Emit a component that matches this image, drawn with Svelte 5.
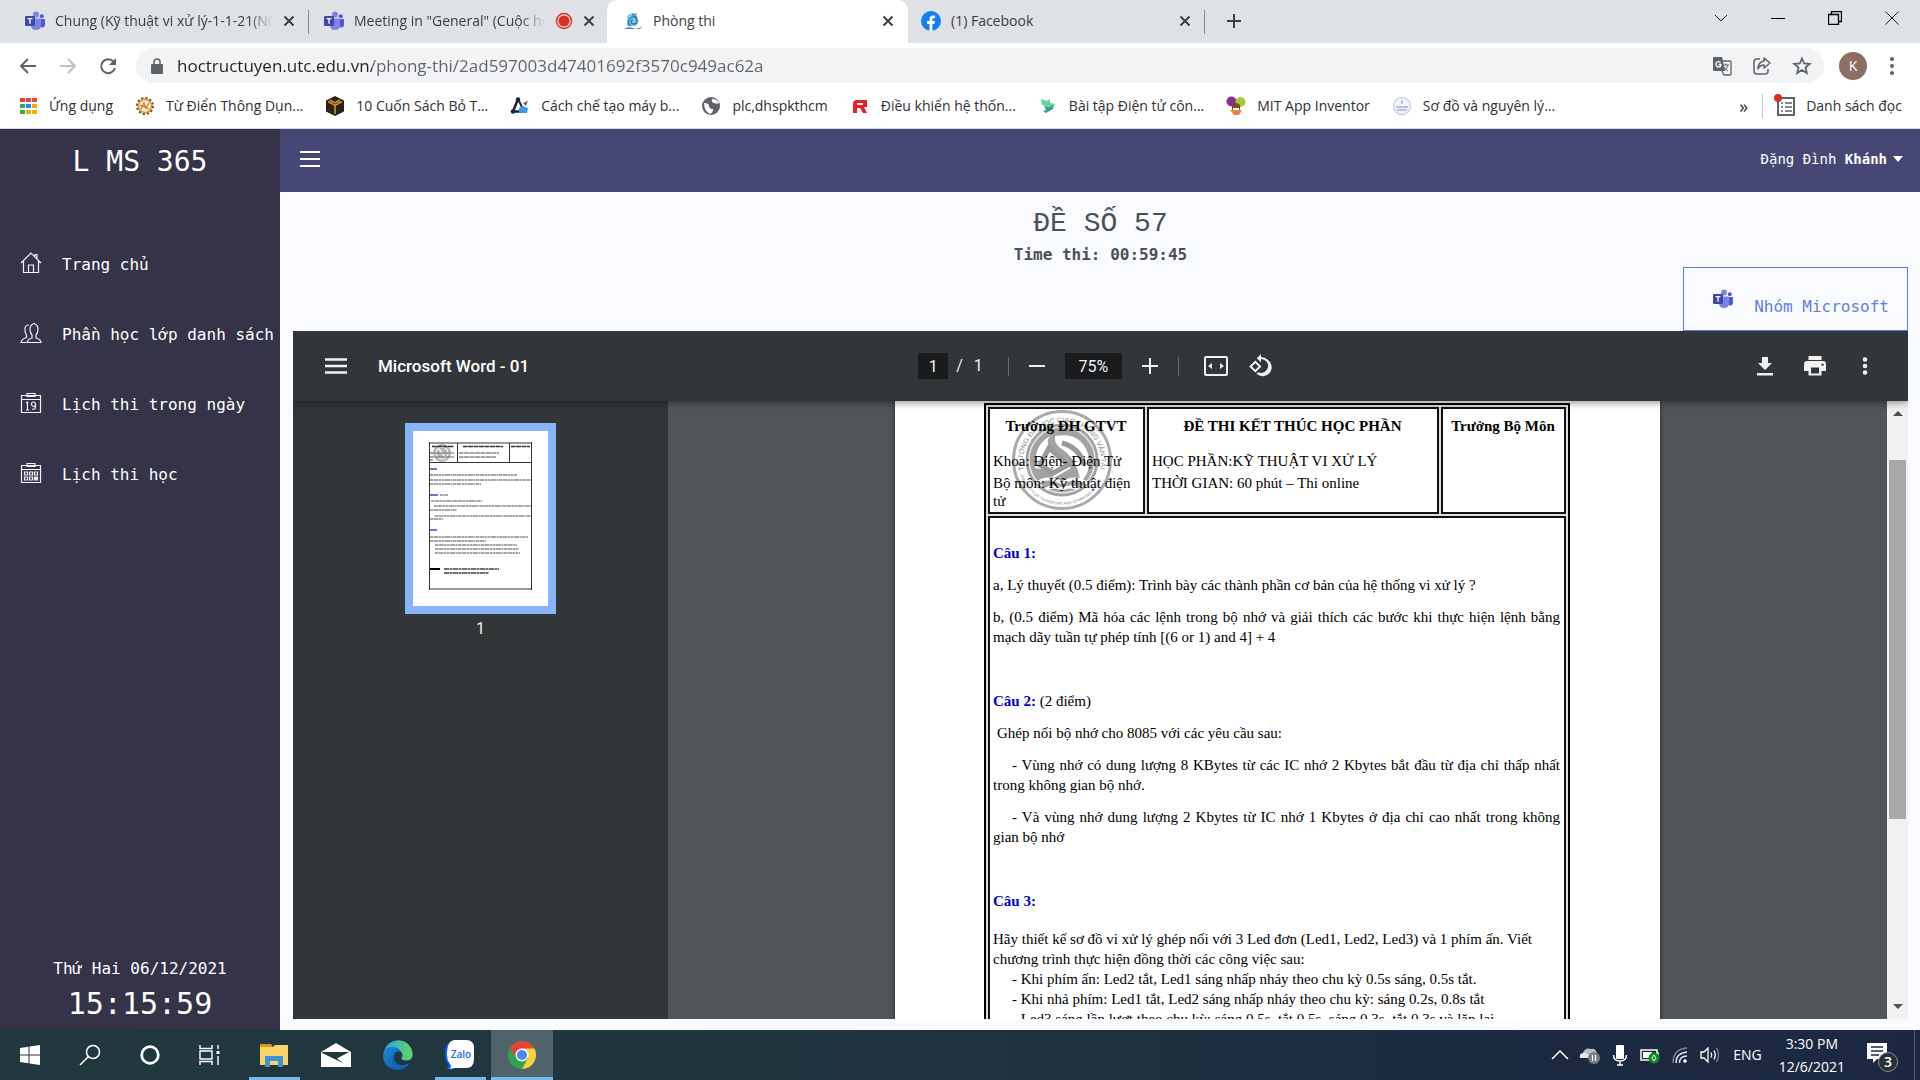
<script>
  const tabs = [
    { title: 'Chung (Kỹ thuật vi xử lý-1-1-21(N07))', icon: 'teams', fade: true },
    { title: 'Meeting in "General" (Cuộc họp)', icon: 'teams', fade: true, recording: true },
    { title: 'Phòng thi', icon: 'utc', active: true },
    { title: '(1) Facebook', icon: 'facebook' }
  ];
  const bookmarks = [
    { label: 'Ứng dụng', icon: 'apps' },
    { label: 'Từ Điển Thông Dụn...', icon: 'gear' },
    { label: '10 Cuốn Sách Bỏ T...', icon: 'box' },
    { label: 'Cách chế tạo máy b...', icon: 'triangle' },
    { label: 'plc,dhspkthcm', icon: 'globe' },
    { label: 'Điều khiển hệ thốn...', icon: 'letterR' },
    { label: 'Bài tập Điện tử côn...', icon: 'bird' },
    { label: 'MIT App Inventor', icon: 'mit' },
    { label: 'Sơ đồ và nguyên lý...', icon: 'seal' }
  ];
  const menu = [
    { label: 'Trang chủ', icon: 'home' },
    { label: 'Phần học lớp danh sách', icon: 'users' },
    { label: 'Lịch thi trong ngày', icon: 'date' },
    { label: 'Lịch thi học', icon: 'calendar' }
  ];
  const thumbLines = [
    [17, 44, 87], [17, 49, 101], [17, 53, 51], [27, 64, 8], [18, 70, 51], [21, 75, 97], [17, 79, 27],
    [22, 85, 96], [17, 88, 13], [17, 106, 98], [17, 110, 56], [22, 114, 82], [22, 118, 84], [22, 122, 85]
  ];
  let page = $state('1');
  let zoom = $state('75%');
  let url = $state('hoctructuyen.utc.edu.vn/phong-thi/2ad597003d47401692f3570c949ac62a');
</script>

{#snippet teams()}
  <svg viewBox="0 0 20 20" width="20" height="20" aria-hidden="true">
    <circle cx="16.8" cy="5.3" r="2" fill="#5059c9" />
    <circle cx="11" cy="3.6" r="3" fill="#7b83eb" />
    <path d="M14 8h5.2q.8 0 .8.8v4.400q0 3.300-3 3.300-3 0-3-3z" fill="#5059c9" />
    <path d="M6 7.500h9.200q.8 0 .8.8v5.700q0 5-5 5t-5-5z" fill="#7b83eb" />
    <rect x="0" y="5" width="10" height="10" rx="1" fill="#4347a8" />
    <path d="M2.600 7.600h4.800M5 7.600v5.200" stroke="#fff" stroke-width="1.300" />
  </svg>
{/snippet}

{#snippet siteIcon(name)}
  {#if name === 'teams'}
    {@render teams()}
  {:else}
    <svg viewBox="0 0 20 20" width="20" height="20" aria-hidden="true">
      {#if name === 'utc'}
        <path d="M4 15V7q0-4 6-5h4v4q2 2 1 6l-2 3z" fill="#8cc4ea" />
        <path d="M10 9q-2 0-2 2t3 2 3-3-3-4-5 3 2 6M9 3l5 4" fill="none" stroke="#2478b8" stroke-width="1.300" />
        <path d="M1 18q4-3 9-1t9-2l-2 3z" fill="#667fa8" />
      {:else if name === 'facebook'}
        <circle cx="10" cy="10" r="10" fill="#1180f5" />
        <path d="M8.500 20v-7H6v-3h2.500V8q0-3.600 3.500-3.600h2v2.800h-1.300q-1.300 0-1.300 1.300V10H14l-.5 3h-2.100v7z" fill="#fff" />
      {:else if name === 'apps'}
        {#each ['#ea4335', '#ea4335', '#ea4335', '#34a853', '#1a8cff', '#fbab00', '#34a853', '#fbab00', '#fbab00'] as c, i}
          <rect x={2 + (i % 3) * 6} y={2 + Math.floor(i / 3) * 6} width="5" height="4" fill={c} />
        {/each}
      {:else if name === 'gear'}
        <circle cx="10" cy="10" r="8" fill="#fff3d8" stroke="#6b4c2e" stroke-width="2" stroke-dasharray="2.200 2" />
        <circle cx="10" cy="10" r="6.500" fill="#fdf0d8" stroke="#e8912d" stroke-width="1.500" />
        <path d="M6 13l3-6 2 5 3-5M5 9l9 4" fill="none" stroke="#c0733a" stroke-width="1.200" />
      {:else if name === 'box'}
        <path d="M10 0l9 4.500v11L10 20l-9-4.500v-11z" fill="#2b2117" />
        <path d="M3 5.500l7 4 7-4M10 9.500V18M5 4l5 3 5-3" fill="none" stroke="#d49a2b" stroke-width="1.500" />
      {:else if name === 'triangle'}
        <path d="M8 3L3 15.500h8" fill="none" stroke="#1d2733" stroke-width="2.500" />
        <path d="M8 3l5 10" fill="none" stroke="#1d2733" stroke-width="2" />
        <circle cx="8" cy="3.500" r="2.200" fill="#1d2733" /><circle cx="3" cy="15.500" r="2.200" fill="#1d2733" />
        <path d="M9 12l4-2 5 2-1 5H9z" fill="#3c9be8" /><path d="M13 7l5-2-2 5z" fill="#666" />
      {:else if name === 'globe'}
        <circle cx="10" cy="10" r="9" fill="#5f6368" />
        <path d="M3 7q5 0 5 3t4 3q0 4-3 5-6-3-6-11M11 3q-1 3 2 4t5 0q-2-4-7-4" fill="#fff" />
      {:else if name === 'letterR'}
        <path d="M3 17V8q0-4 4-4h10v7h-3l3 6h-4l-3-5H7v5zM7 7v2h6V7z" fill="#ee1c25" fill-rule="evenodd" />
      {:else if name === 'bird'}
        <path d="M3 3l6 2 3-2v4l5 1-5 3-8-2z" fill="#65d59a" /><path d="M6 10l6 1 4-3-1 5-7 4-3-2 3-1z" fill="#3c9e8e" />
      {:else if name === 'mit'}
        <circle cx="5.500" cy="5.500" r="5" fill="#8d2f8f" /><circle cx="14.500" cy="6" r="5" fill="#a4ca39" />
        <path d="M6 9q4-4 8 0v5H6z" fill="#7a4b2c" /><path d="M4 14h12l-3 5H8z" fill="#f2843b" /><path d="M7 12h6v2H7z" fill="#fff" />
      {:else}
        <circle cx="10" cy="10" r="8.500" fill="#f4f4fd" stroke="#cfd0ee" stroke-width="1.500" />
        <path d="M10 4v4M4 11h12M5 14h10" stroke="#a9abdc" stroke-width="1.500" />
      {/if}
    </svg>
  {/if}
{/snippet}

<div class="desktop">
  <div class="tabstrip">
    {#each tabs as tab, i}
      <div class="tab" class:active={tab.active} class:divided={i === 0 || i === 3}>
        {@render siteIcon(tab.icon)}
        <span class="tab-title" class:fade={tab.fade}>{tab.title}</span>
        {#if tab.recording}
          <svg viewBox="0 0 18 18" width="18" height="18" aria-hidden="true"><circle cx="9" cy="9" r="7.500" fill="none" stroke="#d93025" stroke-width="1.500" /><circle cx="9" cy="9" r="5.500" fill="#d93025" /></svg>
        {/if}
        <button class="plain close" aria-label="Close tab">
          <svg viewBox="0 0 12 12" width="12" height="12"><path d="M1.500 1.500l9 9m0-9l-9 9" stroke="#3c4043" stroke-width="2" /></svg>
        </button>
      </div>
    {/each}
    <button class="plain newtab" aria-label="New tab">
      <svg viewBox="0 0 16 16" width="16" height="16"><path d="M8 1v14M1 8h14" stroke="#3c4043" stroke-width="2" /></svg>
    </button>
    <div class="window">
      <button class="plain" aria-label="Search tabs"><svg viewBox="0 0 14 14" width="14" height="14"><path d="M1 4l6 6 6-6" fill="none" stroke="#222" /></svg></button>
      <button class="plain" aria-label="Minimize"><svg viewBox="0 0 14 14" width="14" height="14"><path d="M0 7.500h14" stroke="#000" /></svg></button>
      <button class="plain" aria-label="Restore"><svg viewBox="0 0 14 14" width="14" height="14"><path d="M.5 3.500h10v10H.5zM3.500 3V.5h10v10H11" fill="none" stroke="#000" stroke-width="1.300" /></svg></button>
      <button class="plain" aria-label="Close window"><svg viewBox="0 0 14 14" width="14" height="14"><path d="M.5.5l13 13m0-13l-13 13" stroke="#222" /></svg></button>
    </div>
  </div>

  <div class="navbar">
    <div class="nav-buttons">
      <button class="plain" aria-label="Back"><svg viewBox="0 0 18 18" width="18" height="18"><path d="M17 9H2m7-7L2 9l7 7" fill="none" stroke="#5f6368" stroke-width="2" /></svg></button>
      <button class="plain" aria-label="Forward"><svg viewBox="0 0 18 18" width="18" height="18"><path d="M1 9h15M9 2l7 7-7 7" fill="none" stroke="#bdc1c6" stroke-width="2" /></svg></button>
      <button class="plain" aria-label="Reload"><svg viewBox="0 0 18 18" width="18" height="18"><path d="M14.500 4.500A7 7 0 1 0 16 11" fill="none" stroke="#5f6368" stroke-width="2" /><path d="M17 1v7h-7z" fill="#5f6368" /></svg></button>
    </div>
    <div class="omnibox">
      <svg viewBox="0 0 12 16" width="12" height="16" aria-hidden="true"><path d="M1 6h10q1 0 1 1v8q0 1-1 1H1q-1 0-1-1V7q0-1 1-1z" fill="#5f6368" /><path d="M3 6V4q0-3 3-3t3 3v2" fill="none" stroke="#5f6368" stroke-width="1.500" /></svg>
      <input class="url" aria-label="Address" bind:value={url} />
      <button class="plain" aria-label="Translate this page"><svg viewBox="0 0 20 20" width="20" height="20"><path d="M2 1h8l1 4 2 10H2q-1 0-1-1V2q0-1 1-1z" fill="#5f6368" /><path d="M11 5h7q1 0 1 1v12q0 1-1 1h-6l-2-4" fill="none" stroke="#5f6368" stroke-width="1.300" /><path d="M8.500 6.500Q7 5 5.200 6T4 9q1 2.500 3 2t2-2.500H6.500" fill="none" stroke="#fff" stroke-width="1.300" /><path d="M11 9h6m-3-1.500V9m2 0q-1 4-4 6m0-4q2 3 4 4" fill="none" stroke="#5f6368" /></svg></button>
      <button class="plain" aria-label="Share this page"><svg viewBox="0 0 20 20" width="20" height="20"><path d="M8 3H5Q2 3 2 6v9q0 3 3 3h8q3 0 3-3v-2" fill="none" stroke="#5f6368" stroke-width="1.500" /><path d="M12 2l6 5-6 5V9q-4 0-6 4 0-7 6-8z" fill="none" stroke="#5f6368" stroke-width="1.500" stroke-linejoin="round" /></svg></button>
      <button class="plain" aria-label="Bookmark this page"><svg viewBox="0 0 20 20" width="20" height="20"><path d="M10 2.500l2.200 5 5.500.5-4.200 3.600 1.300 5.400-4.800-2.900L5.200 17l1.300-5.400L2.300 8l5.500-.5z" fill="none" stroke="#5f6368" stroke-width="1.800" /></svg></button>
    </div>
    <button class="plain avatar" aria-label="Profile K">K</button>
    <button class="plain dots" aria-label="Chrome menu"><svg viewBox="0 0 4 18" width="4" height="18"><g fill="#5f6368"><circle cx="2" cy="2" r="2" /><circle cx="2" cy="9" r="2" /><circle cx="2" cy="16" r="2" /></g></svg></button>
  </div>

  <div class="bookmarks">
    {#each bookmarks as b}
      <a href="#bookmark">{@render siteIcon(b.icon)}<span>{b.label}</span></a>
    {/each}
    <button class="plain more" aria-label="More bookmarks">»</button>
    <button class="plain reading">
      <svg viewBox="0 0 22 24" width="22" height="24" aria-hidden="true"><path d="M4 4h16v17H4z" fill="none" stroke="#5f6368" stroke-width="2" /><path d="M7 9h2m2 0h7M7 13h2m2 0h7M7 17h2m2 0h7" stroke="#5f6368" stroke-width="1.600" /><circle cx="4" cy="4" r="4" fill="#d93025" /></svg>
      Danh sách đọc
    </button>
  </div>

  <div class="app">
    <aside>
      <div class="brand">L MS 365</div>
      <nav>
        {#each menu as item}
          <a href="#menu">
            <svg viewBox="0 0 22 22" width="22" height="22" aria-hidden="true" fill="none" stroke="#f2f2f7" stroke-width="1.200">
              {#if item.icon === 'home'}
                <path d="M1 11L11 1l10 10M3.500 9v11.500h15V9M8.500 20v-7h5v7M15 4V2.500h2V6" />
              {:else if item.icon === 'users'}
                <path d="M7 20.500h14q0-3-5-4.500v-3q2-2 2-6t-4-5.500Q10 3 10 7t2 6v3q-4 1-5 4.500zM9 3Q4 3 5 9q0 2 1.500 4v2.500Q1.500 17 1 20.500h5" />
              {:else}
                <path d="M1.500 3.500h19v17h-19zM1.500 7.500h19M7 1.500h8v3H7z" />
                {#if item.icon === 'date'}
                  <path d="M6 11l1.500-1v8M6 18h3M15.500 12.500q0-2.500-2-2.500t-2 2 2 2.500 2-2.500v3q0 3-3.500 2" />
                {:else}
                  <path d="M4.500 10h3v3h-3zM9.500 10h3v3h-3zM14.500 10h3v3h-3zM4.500 15h3v3h-3zM9.500 15h3v3h-3zM14.500 15h3v3h-3zM14.500 16.500h3M16 15v3" />
                {/if}
              {/if}
            </svg>
            <span>{item.label}</span>
          </a>
        {/each}
      </nav>
      <div class="today">Thứ Hai 06/12/2021</div>
      <div class="clock">15:15:59</div>
    </aside>

    <div class="content">
      <header>
        <button class="plain" aria-label="Toggle menu"><svg viewBox="0 0 20 18" width="20" height="18"><path d="M0 2h20M0 9h20M0 16h20" stroke="#fff" stroke-width="2" /></svg></button>
        <button class="plain user"><span>Đặng Đình <b>Khánh</b></span><svg viewBox="0 0 10 6" width="10" height="6" aria-hidden="true"><path d="M0 0h10L5 6z" fill="#fff" /></svg></button>
      </header>
      <main>
        <div class="exam">
          <h1>ĐỀ SỐ 57</h1>
          <div class="time">Time thi: 00:59:45</div>
        </div>
        <a class="group" href="#teams">{@render teams()}<span>Nhóm Microsoft</span></a>

        <section class="pdf">
          <div class="pdfbar">
            <div class="pdf-left">
              <button class="plain" aria-label="Menu"><svg viewBox="0 0 22 16" width="22" height="16"><path d="M0 1.500h22M0 8h22M0 14.500h22" stroke="#f1f1f1" stroke-width="2.500" /></svg></button>
              <span>Microsoft Word - 01</span>
            </div>
            <div class="pdf-mid">
              <input class="pageno" aria-label="Page number" bind:value={page} /><span class="of">/</span><span>1</span>
              <i></i>
              <button class="plain" aria-label="Zoom out"><svg viewBox="0 0 16 16" width="16" height="16"><path d="M0 8h16" stroke="#f1f1f1" stroke-width="2" /></svg></button>
              <input class="zoom" aria-label="Zoom level" bind:value={zoom} />
              <button class="plain" aria-label="Zoom in"><svg viewBox="0 0 16 16" width="16" height="16"><path d="M0 8h16M8 0v16" stroke="#f1f1f1" stroke-width="2" /></svg></button>
              <i></i>
              <button class="plain fit" aria-label="Fit to width"><svg viewBox="0 0 24 20" width="24" height="20"><rect x="1" y="1" width="22" height="18" rx="1" fill="none" stroke="#f1f1f1" stroke-width="2" /><path d="M8 7v6l-4-3zM16 7v6l4-3z" fill="#f1f1f1" /></svg></button>
              <button class="plain" aria-label="Rotate"><svg viewBox="0 0 24 24" width="24" height="24"><path d="M7.300 6.400L1.200 12.500l6.100 6 6.200-6-6.200-6.100zM4 12.500l3.300-3.200 3.300 3.200-3.300 3.300zM19.400 5.600A9 9 0 0 0 13 3V0L8.800 4.200 13 8.500V5a7 7 0 1 1-3 13.300l-1.500 1.500A9 9 0 1 0 19.400 5.600z" fill="#f1f1f1" fill-rule="evenodd" /></svg></button>
            </div>
            <div class="pdf-right">
              <button class="plain" aria-label="Download"><svg viewBox="0 0 16 20" width="16" height="20"><path d="M5 1h6v6h4l-7 7-7-7h4zM0 17h16v2.500H0z" fill="#f1f1f1" /></svg></button>
              <button class="plain" aria-label="Print"><svg viewBox="0 0 22 20" width="22" height="20"><path d="M4.500 0h13v4h-13zM3 5h16q3 0 3 3v7h-4.500v4.500h-13V15H0V8q0-3 3-3zm4 6.500v6h8v-6zm11.500-4a1.200 1.200 0 1 0 .1 0z" fill="#f1f1f1" fill-rule="evenodd" /></svg></button>
              <button class="plain" aria-label="More actions"><svg viewBox="0 0 6 18" width="6" height="18"><g fill="#f1f1f1"><circle cx="3" cy="2.500" r="2.300" /><circle cx="3" cy="9" r="2.300" /><circle cx="3" cy="15.500" r="2.300" /></g></svg></button>
            </div>
          </div>
          <div class="pdfbody">
            <div class="thumbs">
              <button class="plain thumb" aria-label="Thumbnail of page 1">
                <svg viewBox="0 0 135 175" width="135" height="175">
                  <circle cx="29" cy="22" r="9" fill="#b5b5b5" /><circle cx="29" cy="22" r="6" fill="none" stroke="#eee" stroke-width="1.500" /><path d="M26 18l6 8" stroke="#eee" stroke-width="2" />
                  <path d="M16 12h103M16.500 11v148M118.500 11v148M16 31.500h103M44.500 12v19M96.500 12v19M16 158h103" stroke="#333" fill="none" />
                  <path d="M19 15.500h22M50 15.500h40M98 15.500h19" stroke="#333" stroke-width="1.600" stroke-dasharray="4 .5 6 .5" />
                  <path d="M17 22h24M17 26h24M46 22h40M46 26h37M17 29h3" stroke="#888" stroke-width="1.400" stroke-dasharray="4 .5 6 .5" />
                  <path d="M17 38h7M17 64h8M17 99h7" stroke="#4a41d8" stroke-width="1.600" />
                  {#each thumbLines as [x, y, w]}
                    <path d="M{x} {y}h{w}" stroke="#8c8c8c" stroke-width="1.300" stroke-dasharray="3 .5 5 .5 2 .5" />
                  {/each}
                  <path d="M17 138h10" stroke="#000" stroke-width="2" /><path d="M31 138h55M31 142h45" stroke="#444" stroke-width="1.600" stroke-dasharray="5 .5 3 .5" />
                </svg>
              </button>
              <span>1</span>
            </div>
            <div class="view">
              <article>
                <table>
                  <colgroup><col class="c1" /><col class="c2" /><col class="c3" /></colgroup>
                  <tbody>
                    <tr class="head">
                      <td>
                        <svg class="stamp" viewBox="-50 -50 100 100" width="100" height="100" aria-hidden="true">
                          <circle r="48.500" fill="#fff" stroke="#aaa" stroke-width="3" />
                          <circle r="34" fill="#a3a3a3" stroke="#a3a3a3" stroke-width="5" />
                          <circle r="33" fill="none" stroke="#e8e8e8" stroke-width="1.500" />
                          <path d="M-27 8Q-28-18-9-25-20-20-8-8L9 8-8 18l-7-8M-7-24Q20-29 27-3 28 16 18 21 16-1-3-13-8-18-7-24z" fill="#fff" />
                          <path d="M-22 5l9-17L6 5-9 13zM0-17q18 5 22 22" fill="none" stroke="#999" stroke-width="5" />
                          <path d="M-25 23q11-8 25 0 13-8 25 0M-16 29q8-4 16 0 9-4 16 0" fill="none" stroke="#fff" stroke-width="3" />
                          <path id="arc-top" d="M-38 10A39 39 0 1 1 38 10" fill="none" />
                          <path id="arc-bottom" d="M-42 14A44 44 0 0 0 42 14" fill="none" />
                          <text font-size="7"><textPath href="#arc-top">TRƯỜNG ĐẠI HỌC GIAO THÔNG VẬN TẢI</textPath></text>
                          <text font-size="4"><textPath href="#arc-bottom">UNIVERSITY OF TRANSPORT AND COMMUNICATIONS</textPath></text>
                        </svg>
                        <p class="top">Trường ĐH GTVT</p>
                        <p class="sub">Khoa: Điện- Điện Tử</p>
                        <p>Bộ môn: Kỹ thuật điện tử</p>
                      </td>
                      <td>
                        <p class="top">ĐỀ THI KẾT THÚC HỌC PHẦN</p>
                        <p class="sub">HỌC PHẦN:KỸ THUẬT VI XỬ LÝ</p>
                        <p>THỜI GIAN: 60 phút – Thi online</p>
                      </td>
                      <td><p class="top">Trưởng Bộ Môn</p></td>
                    </tr>
                    <tr class="body">
                      <td colspan="3">
                        <p><b>Câu 1:</b></p>
                        <p>a, Lý thuyết (0.5 điểm): Trình bày các thành phần cơ bản của hệ thống vi xử lý ?</p>
                        <p>b, (0.5 điểm) Mã hóa các lệnh trong bộ nhớ và giải thích các bước khi thực hiện lệnh bằng mạch dãy tuần tự phép tính [(6 or 1) and 4] + 4</p>
                        <p class="q"><b>Câu 2:</b> (2 điểm)</p>
                        <p class="nudge">Ghép nối bộ nhớ cho 8085 với các yêu cầu sau:</p>
                        <p class="item">- Vùng nhớ có dung lượng 8 KBytes từ các IC nhớ 2 Kbytes bắt đầu từ địa chỉ thấp nhất trong không gian bộ nhớ.</p>
                        <p class="item">- Và vùng nhớ dung lượng 2 Kbytes từ IC nhớ 1 Kbytes ở địa chỉ cao nhất trong không gian bộ nhớ</p>
                        <p class="q"><b>Câu 3:</b></p>
                        <p class="task">Hãy thiết kế sơ đồ vi xử lý ghép nối với 3 Led đơn (Led1, Led2, Led3) và 1 phím ấn. Viết chương trình thực hiện đồng thời các công việc sau:</p>
                        <p class="item tight">- Khi phím ấn: Led2 tắt, Led1 sáng nhấp nháy theo chu kỳ 0.5s sáng, 0.5s tắt.</p>
                        <p class="item tight">- Khi nhả phím: Led1 tắt, Led2 sáng nhấp nháy theo chu kỳ: sáng 0.2s, 0.8s tắt</p>
                        <p class="item tight">- Led3 sáng lần lượt theo chu kỳ: sáng 0.5s, tắt 0.5s, sáng 0.3s, tắt 0.3s và lặp lại.</p>
                      </td>
                    </tr>
                  </tbody>
                </table>
              </article>
            </div>
            <div class="scroll">
              <svg viewBox="0 0 10 6" width="10" height="6" aria-hidden="true"><path d="M0 6h10L5 1z" fill="#505050" /></svg>
              <div class="track"><div class="grip"></div></div>
              <svg viewBox="0 0 10 6" width="10" height="6" aria-hidden="true"><path d="M0 0h10L5 5z" fill="#505050" /></svg>
            </div>
          </div>
        </section>
      </main>
    </div>
  </div>

  <footer>
    <div class="system">
      <button class="plain" aria-label="Start"><svg viewBox="0 0 20 20" width="20" height="20"><path d="M0 3l8.500-1.200v7.700H0zM9.500 1.600L20 0v9.500H9.500zM0 10.500h8.500v7.700L0 17zM9.500 10.500H20V20L9.500 18.400z" fill="#fff" /></svg></button>
      <button class="plain" aria-label="Search"><svg viewBox="0 0 22 22" width="22" height="22"><circle cx="14" cy="8" r="6.500" fill="none" stroke="#fff" stroke-width="1.500" /><path d="M9.500 12.500L1 21" stroke="#fff" stroke-width="1.500" /></svg></button>
      <button class="plain" aria-label="Cortana"><svg viewBox="0 0 22 22" width="22" height="22"><circle cx="11" cy="11" r="8.300" fill="none" stroke="#fff" stroke-width="2.800" /></svg></button>
      <button class="plain" aria-label="Task View"><svg viewBox="0 0 22 20" width="22" height="20"><path d="M1 0v3.500h12V0M1 6h12v8H1zM1 20v-3.500h12V20M19 0v4M19 11v9" fill="none" stroke="#fff" stroke-width="1.400" /><path d="M17.500 6h3v3h-3z" fill="#fff" /></svg></button>
    </div>
    <div class="tasks">
      <button class="plain running" aria-label="File Explorer"><svg viewBox="0 0 28 24" width="28" height="24"><path d="M0 1h11l2 3H0z" fill="#d99a1e" /><path d="M0 4h13l2-2h13v20H0z" fill="#fcd36b" /><path d="M5 24V13h18v11h-5v-6h-8v6z" fill="#3f93d2" /></svg></button>
      <button class="plain" aria-label="Mail"><svg viewBox="0 0 30 24" width="30" height="24"><path d="M0 9L15 0l15 9v15H0z" fill="#fff" /><path d="M1 9h27L16 15.500l7 5L1 10z" fill="#22383f" /></svg></button>
      <button class="plain" aria-label="Microsoft Edge"><svg viewBox="0 0 30 30" width="30" height="30">
        <defs>
          <linearGradient id="edge-a" x1="0" y1="0" x2="1" y2="0"><stop offset="0" stop-color="#2aa6e0" /><stop offset="1" stop-color="#5fd768" /></linearGradient>
          <linearGradient id="edge-b" x1="0" y1="0" x2="1" y2="1"><stop offset="0" stop-color="#1b8bd8" /><stop offset="1" stop-color="#0c4d9c" /></linearGradient>
        </defs>
        <path d="M1 12A14.500 14.500 0 0 1 29.700 14q0 6-6 6.500-6 0-5-3 2-3-1-6-8-5-16.700.5z" fill="url(#edge-a)" />
        <path d="M0 16q0-9 9-9 7 0 9 5-5-2-7 3-1 6 4 9 5 3 12-1-4 7-12 7Q1 29 0 16z" fill="url(#edge-b)" />
        <path d="M11 14q-2 6 3 10 5 3 12-1-5 8-14 5Q6 22 11 14z" fill="#1463ad" />
      </svg></button>
      <button class="plain running" aria-label="Zalo"><svg viewBox="0 0 30 30" width="30" height="30"><path d="M4 2Q0 6 0 14q0 8 4 11l-2 4q5 1 8-2l10 1z" fill="#0068ff" /><path d="M10 0h11q8 0 8 8v11q0 9-8 9H10l-5 1q2-3 0-5-3-4-3-9 0-15 8-15z" fill="#fff" /><text x="16" y="18" text-anchor="middle" font-size="10" font-weight="600" fill="#1269f0">Zalo</text></svg></button>
      <button class="plain running current" aria-label="Google Chrome"><svg viewBox="0 0 28 28" width="28" height="28"><circle cx="14" cy="14" r="14" fill="#31a350" /><path d="M14 14L1.900 7A14 14 0 0 1 26.100 7z" fill="#ea4335" /><path d="M14 7.500h12.400A14 14 0 0 1 14 28l6-11z" fill="#fbd03b" /><path d="M1.900 7L8.500 17.500 12 8z" fill="#ea4335" /><circle cx="14" cy="14" r="6.500" fill="#fff" /><circle cx="14" cy="14" r="5.100" fill="#4a8af4" /></svg></button>
    </div>
    <div class="tray">
      <button class="plain" aria-label="Show hidden icons"><svg viewBox="0 0 18 18" width="18" height="18"><path d="M1 13l8-8 8 8" fill="none" stroke="#fff" stroke-width="1.500" /></svg></button>
      <button class="plain" aria-label="OneDrive"><svg viewBox="0 0 22 20" width="22" height="20"><path d="M1 13q-1-4 3-5Q6 2 12 4q5-1 6 5v4H4q-2 0-3 0z" fill="#b8bcc2" /><path d="M1 13q-1-4 3-5 4-1 5 2l4 3z" fill="#e5e7ea" /><circle cx="15" cy="13" r="6" fill="#777b80" /><path d="M13.500 10v6M16.500 10v6" stroke="#fff" stroke-width="1.200" /></svg></button>
      <button class="plain" aria-label="Microphone"><svg viewBox="0 0 16 22" width="16" height="22"><rect x="4" y="1" width="8" height="14" rx="1" fill="#fff" /><path d="M1.500 11q0 6 6.500 6t6.500-6M8 17v4M5 21h6" fill="none" stroke="#fff" stroke-width="1.400" /></svg></button>
      <button class="plain" aria-label="Battery"><svg viewBox="0 0 22 20" width="22" height="20"><path d="M2 5h16v10H2zM18 8h1v4" fill="none" stroke="#fff" stroke-width="1.500" /><path d="M4 7h9v6H4z" fill="#fff" /><circle cx="15" cy="13" r="5.500" fill="#0f8a1f" /><path d="M15 10l2 3-2 3-2-3z" fill="none" stroke="#fff" /></svg></button>
      <button class="plain" aria-label="Network"><svg viewBox="0 0 18 18" width="18" height="18" fill="none" stroke-width="1.400"><path d="M2 17Q2 3 16 2" stroke="#7b8595" /><path d="M5 17q0-10 11-11M8.500 17q0-7 7.500-7" stroke="#e6e8eb" /><circle cx="14" cy="15" r="1.800" fill="#fff" /></svg></button>
      <button class="plain" aria-label="Volume"><svg viewBox="0 0 20 18" width="20" height="18" fill="none" stroke="#fff" stroke-width="1.300"><path d="M1 6h3l4-4v14l-4-4H1zM11 6.500q1.500 2.500 0 5M14 4.500q2.500 4.500 0 9" /><path d="M16.500 2q4 7 0 14" stroke="#7b8595" /></svg></button>
      <span class="lang">ENG</span>
      <div class="datetime"><span>3:30 PM</span><span>12/6/2021</span></div>
      <button class="plain notice" aria-label="3 notifications"><svg viewBox="0 0 20 20" width="20" height="20"><path d="M0 0h20v16H10l-4 4v-4H0z" fill="#fff" /><path d="M4 4h12M4 8h12M4 12h8" stroke="#1c2940" stroke-width="1.300" /></svg><span>3</span></button>
    </div>
  </footer>
</div>

<style>
  :global(body) { margin: 0; overflow: hidden; }
  .desktop { display: flex; flex-direction: column; height: 100vh; background: #fff; font-family: "Open Sans", "Noto Sans", sans-serif; font-size: 14px; line-height: 20px; color: #3c4043; }
  .desktop :global(*) { box-sizing: border-box; }
  svg { display: block; flex: none; }
  a { color: inherit; text-decoration: none; }
  .plain { display: flex; align-items: center; justify-content: center; padding: 0; border: 0; background: none; color: inherit; font: inherit; white-space: nowrap; }
  input { border: 0; padding: 0; font: inherit; color: inherit; outline: 0; min-width: 0; }

  .tabstrip { display: flex; height: 43px; padding-left: 11px; background: #dee1e6; }
  .tab { position: relative; display: flex; align-items: center; flex: 0 1 299px; min-width: 0; padding: 0 14px 2px; gap: 10px; }
  .tab.active { margin: 0 -1px 0 -2px; flex-basis: 301px; padding: 0 14px 2px 16px; background: #fff; border-radius: 10px 10px 0 0; }
  .tab.divided { border-right: 1px solid transparent; }
  .tab.divided::after { content: ""; position: absolute; right: 0; top: 10px; width: 1px; height: 24px; background: #85888d; }
  .tab-title { flex: 1; min-width: 0; overflow: hidden; white-space: nowrap; }
  .fade { mask-image: linear-gradient(90deg, #000 calc(100% - 24px), transparent); }
  .newtab { width: 56px; padding-bottom: 2px; }
  .window { display: flex; margin-left: auto; height: 36px; }
  .window button { width: 57px; }

  .navbar { display: flex; align-items: center; height: 45px; }
  .nav-buttons { display: flex; padding-left: 8px; width: 136px; }
  .nav-buttons button { width: 40px; }
  .omnibox { display: flex; align-items: center; flex: 1; height: 35px; padding: 0 12px 0 15px; gap: 20px; border-radius: 18px; background: #f1f3f4; }
  .url { flex: 1; margin-left: -6px; height: 28px; font-size: 17px; color: transparent; background: linear-gradient(90deg, #202124 195px, #5f6368 195px); background-clip: text; -webkit-background-clip: text; }
  .avatar { width: 28px; height: 28px; margin: 0 15px; border-radius: 50%; background: #8d6e63; color: #fff; }
  .dots { width: 20px; margin-right: 18px; }

  .bookmarks { display: flex; align-items: center; height: 41px; padding: 0 18px 4px; gap: 22px; border-bottom: 1px solid #d5d9e6; color: #303134; }
  .bookmarks a { display: flex; align-items: center; gap: 11px; white-space: nowrap; }
  .more { margin-left: auto; font-size: 18px; margin-right: -8px; }
  .reading { height: 24px; gap: 10px; padding-left: 11px; border-left: 1px solid #c4c7cc; }

  .app { display: flex; flex: 1; min-height: 0; background: #fafbff; font-family: "DejaVu Sans Mono", monospace; font-size: 16px; line-height: 24px; }
  aside { display: flex; flex-direction: column; width: 280px; flex: none; background: #343348; color: #fff; }
  .brand { height: 64px; line-height: 66px; text-align: center; font-size: 28px; }
  nav { display: flex; flex-direction: column; padding-top: 37px; }
  nav a { display: flex; align-items: center; height: 70px; padding-left: 20px; gap: 20px; white-space: nowrap; }
  nav svg { margin-bottom: 4px; }
  .today { margin-top: auto; text-align: center; }
  .clock { padding: 6px 0 9px; text-align: center; font-size: 30px; line-height: 34px; }
  .content { display: flex; flex-direction: column; flex: 1; min-width: 0; }
  header { display: flex; align-items: center; justify-content: space-between; height: 63px; flex: none; padding: 0 17px 3px 20px; background: #464775; color: #fff; }
  .user { font-size: 14px; gap: 6px; }
  main { display: flex; flex-direction: column; flex: 1; min-height: 0; padding: 0 12px 11px 13px; }
  .exam { display: flex; flex-direction: column; align-items: center; height: 75px; padding-top: 12px; color: #495057; }
  h1 { margin: 0; font-family: "Liberation Mono", monospace; font-size: 28px; line-height: 39px; font-weight: 400; }
  .time { font-weight: 700; }
  .group { display: flex; align-items: center; align-self: flex-end; height: 64px; width: 225px; padding: 0 18px 0 29px; justify-content: space-between; border: 1px solid #5c7cd8; color: #6280e2; white-space: nowrap; }
  .group span { padding-top: 16px; }

  .pdf { display: flex; flex-direction: column; flex: 1; min-height: 0; overflow: hidden; font-family: Roboto, sans-serif; color: #f1f1f1; }
  .pdfbar { position: relative; z-index: 1; display: flex; align-items: center; height: 70px; flex: none; background: #323639; box-shadow: 0 1px 8px rgba(0, 0, 0, .5); }
  .pdf-left { display: flex; flex: 1; align-items: center; gap: 31px; padding-left: 32px; font-size: 17px; font-weight: 500; color: #fff; }
  .pdf-mid { display: flex; align-items: center; margin-right: 25px; }
  .pdf-mid i { width: 1px; height: 19px; margin: 0 20px; background: #6b6e71; }
  .pdf-mid span + i { margin-left: 25px; }
  .pdf-mid input { height: 26px; background: #191b1c; text-align: center; }
  .pageno { width: 30px; }
  .of { margin: 0 11px 0 8px; }
  .zoom { width: 57px; margin: 0 20px; }
  .fit { margin: 0 20px 0 5px; }
  .pdf-right { display: flex; flex: 1; justify-content: flex-end; padding: 0 18px 0 0; }
  .pdf-right button { width: 50px; }
  .pdfbody { display: flex; flex: 1; min-height: 0; }
  .thumbs { display: flex; flex-direction: column; align-items: center; flex: none; width: 375px; padding: 22px 0 0 0; background: #323639; }
  .thumb { border: 8px solid #8ab4f8; background: #fff; margin-bottom: 3px; }
  .view { display: flex; flex: 1; min-width: 0; justify-content: center; align-items: flex-start; overflow: hidden; background: #525659; }
  article { width: 765px; flex: none; padding: 2px 90px 90px 89px; background: #fff; color: #000; font-family: "Liberation Serif", serif; font-size: 15px; line-height: 20px; box-shadow: 0 0 5px rgba(0, 0, 0, .5); }
  table { width: 100%; table-layout: fixed; border: 2px solid #000; border-collapse: separate; border-spacing: 2px; background: #ddd; }
  .c1 { width: 157px; }
  .c3 { width: 125px; }
  td { position: relative; border: 2px solid #111; padding: 0 4px 0 3px; background: #fff; vertical-align: top; }
  p { position: relative; margin: 0; }
  .head td { height: 107px; line-height: 18px; padding-top: 8px; }
  .head .top { margin-bottom: 17px; text-align: center; font-weight: 700; white-space: nowrap; }
  .head .sub { margin-bottom: 4px; white-space: nowrap; }
  .stamp { position: absolute; left: 22px; top: 1px; font-family: "Liberation Sans", sans-serif; fill: #888; }
  .body td { height: 620px; padding-top: 25px; text-align: justify; }
  .body p { margin-bottom: 12px; }
  .body b { color: #0000d8; }
  .body .q { padding-top: 32px; }
  .body .nudge { padding-left: 4px; }
  .body .item { text-indent: 19px; }
  .body .task { padding-top: 6px; margin-bottom: 0; text-align: left; }
  .body .tight { margin-bottom: 0; white-space: nowrap; }
  .scroll { display: flex; flex-direction: column; align-items: center; width: 21px; flex: none; padding: 9px 0; background: #f1f1f1; }
  .track { flex: 1; width: 17px; padding-top: 44px; }
  .grip { height: 66%; background: #a8a8a8; }

  footer { display: flex; height: 50px; flex: none; background: linear-gradient(90deg, #22383f, #20363f 40%, #1b2a40 80%, #1c2842); color: #fff; }
  .system { display: flex; margin-right: 3px; }
  .system button { width: 60px; }
  .tasks { display: flex; }
  .tasks button { position: relative; width: 62px; }
  .running::after { content: ""; position: absolute; bottom: 0; left: 6px; right: 5px; height: 3px; background: #76b9ed; }
  .current { background: #50636b; }
  .current::after { left: 0; right: 0; }
  .tray { display: flex; align-items: center; margin-left: auto; padding-right: 5px; border-right: 1px solid #55607a; margin-right: 5px; }
  .tray > button { width: 30px; }
  .lang { margin: 0 17px 0 8px; }
  .datetime { display: flex; flex-direction: column; align-items: center; line-height: 23px; }
  .tray .notice { position: relative; width: 64px; }
  .notice svg { margin-bottom: 4px; }
  .notice span { position: absolute; left: 33px; top: 9px; width: 20px; height: 20px; border: 1px solid #8a8d92; border-radius: 50%; background: #2c3036; line-height: 18px; font-weight: 600; }
</style>
